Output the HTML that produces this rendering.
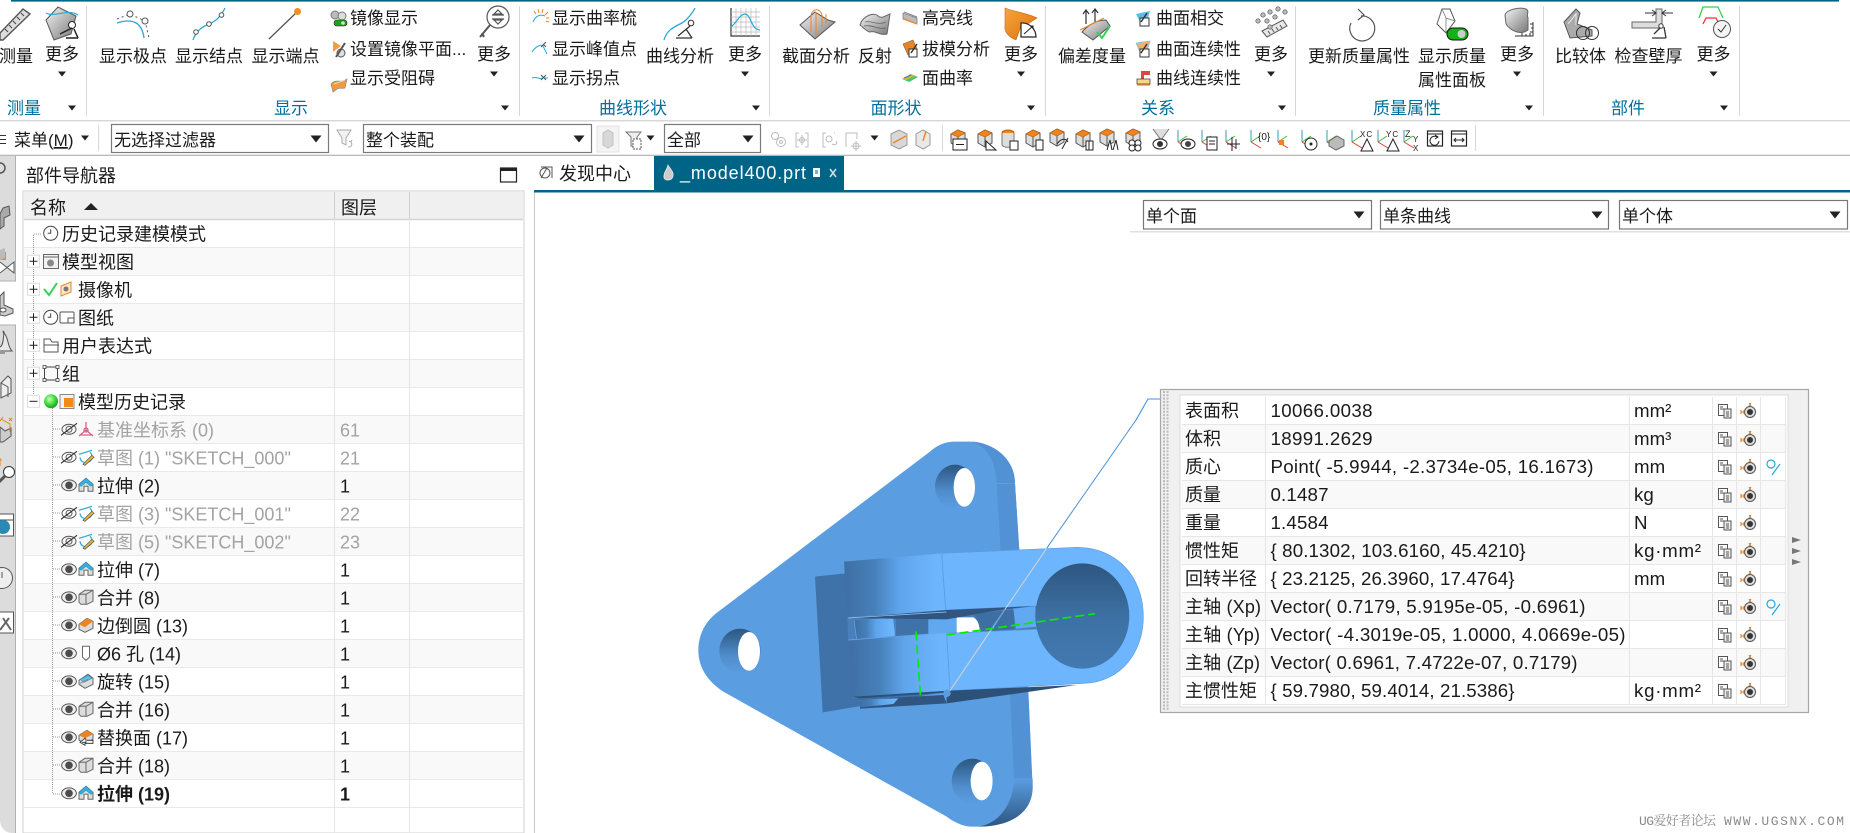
<!DOCTYPE html>
<html lang="zh"><head><meta charset="utf-8"><title>NX</title>
<style>
html,body{margin:0;padding:0;background:#fff;overflow:hidden}
svg{display:block}
text{font-family:"Liberation Sans","Noto Sans CJK SC",sans-serif;fill:#1a1a1a;font-size:17px}
.m{text-anchor:middle}
.g{fill:#00709b;text-anchor:middle}
.t{font-size:18px}
.v{font-size:18.7px}
.d{font-size:18px;fill:#a3a3a3}
.b{font-size:18px;font-weight:bold}
.w{fill:#fff}
</style></head><body>
<svg width="1850" height="833" viewBox="0 0 1850 833" xmlns="http://www.w3.org/2000/svg">
<defs>
<linearGradient id="hole" x1="0" y1="0" x2="0" y2="1"><stop offset="0" stop-color="#2c5680"/><stop offset=".6" stop-color="#4f8ccb"/><stop offset="1" stop-color="#5b9de1"/></linearGradient>
<linearGradient id="cyl" x1="0" y1="0" x2="1" y2="0"><stop offset="0" stop-color="#3f6fa3"/><stop offset=".3" stop-color="#4680ba"/><stop offset=".55" stop-color="#5fa5ec"/><stop offset=".9" stop-color="#6db5fd"/></linearGradient>
<linearGradient id="bore" x1="0" y1="0" x2="0" y2="1"><stop offset="0" stop-color="#2e5680"/><stop offset=".55" stop-color="#3e72a6"/><stop offset="1" stop-color="#4279b0"/></linearGradient>
<linearGradient id="earb" x1="0" y1="0" x2="0" y2="1"><stop offset="0" stop-color="#5b9de1"/><stop offset="1" stop-color="#2c5680"/></linearGradient>
<linearGradient id="sh" x1="0" y1="0" x2="1" y2="1"><stop offset="0" stop-color="#f4f4f4"/><stop offset="1" stop-color="#777"/></linearGradient>
<linearGradient id="or" x1="0" y1="0" x2="1" y2="1"><stop offset="0" stop-color="#f9a63c"/><stop offset="1" stop-color="#d96f0c"/></linearGradient>
<radialGradient id="gr" cx=".4" cy=".35" r=".7"><stop offset="0" stop-color="#c8ffb0"/><stop offset=".6" stop-color="#35d635"/><stop offset="1" stop-color="#149414"/></radialGradient>

<g id="arr"><path d="M-4 -2.5H4L0 2.5Z" fill="#222"/></g>
<g id="ddarr"><path d="M-5.5 -3.5H5.5L0 3.5Z" fill="#222"/></g>
<g id="eye"><ellipse rx="7.4" ry="5.4" fill="#eee" stroke="#555"/><circle r="3.8" fill="#4c4c4c"/></g>
<g id="eyeoff"><ellipse rx="7" ry="5" fill="none" stroke="#555"/><circle r="3" fill="none" stroke="#555"/><path d="M-8 6L8 -6" stroke="#333" stroke-width="1.2"/></g>
<g id="cube"><path d="M-7 -3L-1 -7H7V4L1 7H-5L-7 5Z" fill="#ddd" stroke="#666"/><path d="M-7 -3H0L7 -7M0 -3V7" fill="none" stroke="#666"/></g>
<g id="ext"><path d="M-7 -1L0 -7L7 -1V6H2V1H-2V6H-7Z" fill="#ddd" stroke="#666"/><path d="M-7 -1L0 -7L7 -1L5 1L0 -3L-5 1Z" fill="#38b0de" stroke="#1f8db8" stroke-width=".6"/></g>
<g id="fil"><path d="M-7 -1L1 -7L7 -4V3L-1 7L-7 4Z" fill="#ddd" stroke="#666"/><path d="M-7 -1L1 -7L7 -4L-1 2Z" fill="#ee8420"/></g>
<g id="hole2"><path d="M-3.5 -7H3.5V4L0 7L-3.5 4Z" fill="#fff" stroke="#666"/></g>
<g id="rev"><path d="M-7 -1L2 -7L7 -3V3L-1 7L-7 3Z" fill="#ddd" stroke="#666"/><path d="M-6 -2L2 -6L6 -3L-2 1Z" fill="#5cc0e6" stroke="#2c8db0" stroke-width=".6"/><path d="M-6 2L2 -2" stroke="#888" fill="none"/></g>
<g id="rep"><path d="M-7 -2L1 -7L7 -3V2L-1 6L-7 3Z" fill="#ddd" stroke="#666"/><path d="M-7 -2L1 -7L7 -3L-1 1Z" fill="#ee8420"/><path d="M-4 5H0V2L-1 1L-6 5L-1 8V6H7V3H1" fill="#fff" stroke="#222" stroke-width=".8"/></g>
<g id="skt"><path d="M-6 0A6 6 0 1 0 4 -5M-7 -3L6 -7" fill="none" stroke="#2aa6d6" stroke-width="1.2"/><path d="M-3 7L6 -2L8 0L-1 8Z" fill="#e9b93b" stroke="#555" stroke-width=".7"/></g>
<g id="clk"><circle r="7" fill="#fff" stroke="#444"/><path d="M0 -4V0H-3" fill="none" stroke="#444"/></g>
<g id="plus"><rect x="-6" y="-6" width="12" height="12" fill="#fff" stroke="#dedede"/><path d="M-4 0H4M0 -4V4" stroke="#222"/></g>
<g id="minus"><rect x="-6" y="-6" width="12" height="12" fill="#fff" stroke="#dedede"/><path d="M-4 0H4" stroke="#222"/></g>

<g id="pi1"><rect x="-6.5" y="-6.5" width="9" height="11" fill="#fff" stroke="#555"/><path d="M-5 -4H-2M-5 -2H-1" stroke="#555"/><rect x="-1" y="-2" width="7" height="9" fill="#eee" stroke="#555"/><path d="M1 1H4M1 3H4M1 5H4" stroke="#555"/></g>
<g id="pi2"><path d="M0 -8L2 -5M2 -8L0 -5" stroke="#e8730c"/><circle cx="1" cy="1" r="5.5" fill="#ddd" stroke="#555"/><circle cx="1" cy="1" r="3" fill="#333"/><path d="M-8 1H-5M-8 -1V3M-5 -1V3" stroke="#e8730c"/></g>
<g id="pi3"><circle cx="-2" cy="-3" r="4" fill="none" stroke="#22a8d8" stroke-width="1.2"/><path d="M-1 8L7 -3" stroke="#22a8d8" stroke-width="1.2"/></g>

<g id="tc"><path d="M-8 -4L-1 -8L6 -5V5L-1 9L-8 5Z" fill="#ddd" stroke="#555"/><path d="M-8 -4L-1 -8L6 -5L-1 -1Z" fill="#ee8420" stroke="#b65c06" stroke-width=".6"/><path d="M-1 -1V9" stroke="#555"/></g>
<g id="csy"><path d="M-6 6L-6 -6" stroke="#3a9db0" stroke-width="1"/><path d="M-6 6L3 0" stroke="#3dbb3d" stroke-width="1"/><path d="M-6 6L4 12" stroke="#e63535" stroke-width="1"/></g>
</defs>

<rect width="1850" height="833" fill="#fff"/>
<!-- top line -->
<rect x="11" y="0" width="1828" height="1.6" fill="#006487"/>

<!-- ribbon separators -->
<g stroke="#d8d8d8"><path d="M86.5 6V116M519.5 6V116M769.5 6V116M1045.5 6V116M1295.5 6V116M1543.5 6V116M1739.5 6V116"/></g>

<!-- ribbon text -->
<text class="m" x="16" y="62">测量</text>
<text class="m" x="62" y="60">更多</text>
<text class="g" x="24" y="114">测量</text>
<text class="m" x="133" y="62">显示极点</text>
<text class="m" x="209" y="62">显示结点</text>
<text class="m" x="285.500" y="62">显示端点</text>
<text x="350" y="24">镜像显示</text>
<text x="350" y="55">设置镜像平面...</text>
<text x="350" y="84">显示受阻碍</text>
<text class="m" x="494" y="60">更多</text>
<text class="g" x="291" y="114">显示</text>
<text x="552" y="24">显示曲率梳</text>
<text x="552" y="55">显示峰值点</text>
<text x="552" y="84">显示拐点</text>
<text class="m" x="680" y="62">曲线分析</text>
<text class="m" x="745" y="60">更多</text>
<text class="g" x="633" y="114">曲线形状</text>
<text class="m" x="816" y="62">截面分析</text>
<text class="m" x="875" y="62">反射</text>
<text x="922" y="24">高亮线</text>
<text x="922" y="55">拔模分析</text>
<text x="922" y="84">面曲率</text>
<text class="m" x="1021" y="60">更多</text>
<text class="g" x="896" y="114">面形状</text>
<text class="m" x="1092" y="62">偏差度量</text>
<text x="1156" y="24">曲面相交</text>
<text x="1156" y="55">曲面连续性</text>
<text x="1156" y="84">曲线连续性</text>
<text class="m" x="1271" y="60">更多</text>
<text class="g" x="1158" y="114">关系</text>
<text class="m" x="1359" y="62">更新质量属性</text>
<text class="m" x="1452" y="62">显示质量</text>
<text class="m" x="1452" y="86">属性面板</text>
<text class="m" x="1517" y="60">更多</text>
<text class="g" x="1407" y="114">质量属性</text>
<text class="m" x="1580.500" y="62">比较体</text>
<text class="m" x="1648.500" y="62">检查壁厚</text>
<text class="m" x="1713.500" y="60">更多</text>
<text class="g" x="1628" y="114">部件</text>

<!-- ribbon arrows -->
<use href="#arr" x="62" y="74"/><use href="#arr" x="72" y="108"/>
<use href="#arr" x="494" y="74"/><use href="#arr" x="505" y="108"/>
<use href="#arr" x="745" y="74"/><use href="#arr" x="756" y="108"/>
<use href="#arr" x="1021" y="74"/><use href="#arr" x="1031" y="108"/>
<use href="#arr" x="1271" y="74"/><use href="#arr" x="1282" y="108"/>
<use href="#arr" x="1517" y="74"/><use href="#arr" x="1529" y="108"/>
<use href="#arr" x="1713.500" y="74"/><use href="#arr" x="1724" y="108"/>

<!-- ribbon icons -->
<g><path d="M0 33L23 9L30 14L3 40H0Z" fill="#ddd" stroke="#555" stroke-width="1.4"/><path d="M5 29L8 32M9 25L12 28M13 21L16 24M17 17L20 20M21 13L24 16" stroke="#444"/></g>
<g><path d="M46 20L58 7L76 16L71 34L54 40Z" fill="url(#sh)" stroke="#555"/><path d="M46 13C55 18 68 8 78 15" fill="none" stroke="#28a9d6" stroke-width="1.2"/><circle cx="72" cy="25" r="3.500" fill="#fff" stroke="#222"/><path d="M60 34L72 28M66 38H78M74 29L78 38" stroke="#222" stroke-width="1.500"/></g>
<g fill="none"><path d="M117 19L130 14L145 21L149 38" stroke="#555" stroke-dasharray="2 3"/><path d="M117 23C132 18 142 22 144 38" stroke="#28a9d6" stroke-width="1.300"/><circle cx="130" cy="14" r="3" fill="#fff" stroke="#555"/><circle cx="145" cy="21" r="3" fill="#fff" stroke="#555"/></g>
<g fill="none"><path d="M193 40C196 30 204 26 211 23C218 20 222 14 225 8" stroke="#28a9d6" stroke-width="1.300"/><circle cx="196" cy="32" r="2.300" fill="#fff" stroke="#555"/><circle cx="209" cy="24" r="2.300" fill="#fff" stroke="#555"/><circle cx="221.500" cy="15" r="2.300" fill="#fff" stroke="#555"/></g>
<g><path d="M269 39L297 12" stroke="#555" stroke-width="1.300"/><circle cx="297.500" cy="11.500" r="3.500" fill="#f09020"/></g>
<g><circle cx="335" cy="15" r="4" fill="#bbb" stroke="#777"/><circle cx="342" cy="16" r="4" fill="#ddd" stroke="#777"/><rect x="334" y="20" width="13" height="6" rx="3" fill="#1aa41a" stroke="#222" stroke-width=".6"/><circle cx="343" cy="23" r="1.800" fill="#ddd"/></g>
<g><path d="M333 41L341 46L333 52Z" fill="#f0a040"/><circle cx="341" cy="53" r="4" fill="#ddd" stroke="#555"/><path d="M345 43L336 57" stroke="#555" stroke-width="2"/></g>
<g><path d="M331 84C336 78 340 84 347 79L345 88C340 89 338 87 336 90L333 92Z" fill="#ef9b3d" stroke="#888" stroke-width=".7"/><path d="M334 84L345 80" stroke="#ddd"/></g>
<g fill="none" stroke="#555" stroke-width="1.200"><circle cx="498" cy="17" r="11" fill="#fff"/><path d="M490 25L480 37M482 33L484 37" stroke-width="2"/><path d="M492 15H504M492 19H504" /><path d="M494 14L498 10L502 14ZM494 20L498 24L502 20Z" fill="#fff"/></g>
<g fill="none"><path d="M533 22C536 15 541 14 545 16" stroke="#28a9d6"/><path d="M536 14L534 11M539 13L538 9M542 13L543 9M545 15L548 12M546 18L549 18M546 21L549 22" stroke="#ee8420"/>
<path d="M532 52C536 46 541 44 543 46L547 54" stroke="#28a9d6"/><path d="M541 47L546 42M543 44L546 47" stroke="#555"/>
<path d="M532 78C537 76 539 80 543 78H548" stroke="#28a9d6"/><path d="M541 75L546 80M546 75L541 80" stroke="#555"/></g>
<g fill="none"><path d="M664 40C668 26 680 26 686 20C690 16 693 12 695 8" stroke="#28a9d6" stroke-width="1.300"/><circle cx="691" cy="23" r="2.800" fill="#fff" stroke="#333"/><path d="M678 36L690 26M676 38H692M686 29L692 38" stroke="#333" stroke-width="1.300"/></g>
<g fill="none"><path d="M731 8V36H760" stroke="#333" stroke-width="1.200"/><path d="M736 8V36M741 8V36M746 8V36M751 8V36M756 8V36M731 12H760M731 17H760M731 22H760M731 27H760M731 32H760" stroke="#bbb" stroke-width=".7"/><path d="M731 27C737 22 740 14 745 14C751 14 751 30 760 30" stroke="#28a9d6" stroke-width="1.200"/></g>
<g><path d="M800 25L815 12L828 20L835 22L815 39Z" fill="url(#sh)" stroke="#555"/><path d="M811 32V15C813 8 820 8 822 15V27M816 35V12M826 23V14" fill="none" stroke="#ee8420"/></g>
<g><path d="M860 25C863 15 875 12 878 16C882 19 885 16 890 14L887 34C880 36 875 30 870 32C867 32 864 28 860 25Z" fill="url(#sh)" stroke="#666"/><path d="M865 22C870 20 878 26 886 22M864 26C872 24 878 30 886 28" fill="none" stroke="#666" stroke-width=".8"/></g>
<g><path d="M903 13L917 18V24L903 19Z" fill="#bbb" stroke="#666" stroke-width=".6"/><path d="M904 19L917 24" stroke="#ee8420" stroke-width="1.400"/><path d="M904 12L917 17" stroke="#888"/></g>
<g><path d="M903 44L913 40L917 49L908 55Z" fill="#ee8420" stroke="#666" stroke-width=".6"/><rect x="909" y="49" width="8" height="8" fill="#fff" stroke="#333"/><path d="M911 53L917 44" stroke="#333" stroke-width="1.400"/></g>
<g><path d="M902 79L911 74L918 77L909 82Z" fill="#3ccb6a"/><path d="M902 79L911 74L915 76L906 80Z" fill="#e8b030"/><path d="M904 78L911 75" stroke="#3a78d8" stroke-width="1.200"/></g>
<g><path d="M1005 8C1012 11 1030 14 1037 18L1020 29L1016 40C1009 37 1004 32 1005 26Z" fill="url(#or)" stroke="#c96a10" stroke-width=".6"/><path d="M1021 23A14 14 0 0 1 1036 37H1021Z" fill="#fff" stroke="#222" stroke-width="1.200"/><path d="M1024 34L1033 26M1030 26H1033V29" fill="none" stroke="#222"/></g>
<g><path d="M1082 32C1087 26 1096 20 1106 20L1110 26L1093 40Z" fill="url(#sh)" stroke="#555"/><path d="M1086 10V24M1083 14L1086 10L1089 14M1095 9V22M1092 13L1095 9L1098 13" fill="none" stroke="#333" stroke-width="1.200"/><path d="M1080 30L1104 18" stroke="#ee8420"/><path d="M1097 32L1102 38L1110 26" fill="none" stroke="#34d152" stroke-width="2"/></g>
<g><path d="M1136 14L1150 11L1147 21L1140 22Z" fill="#5cc0e6"/><rect x="1140" y="18" width="9" height="8" fill="#fff" stroke="#333"/><path d="M1141 22L1147 13" stroke="#333" stroke-width="1.400"/></g>
<g><path d="M1136 43L1150 41L1147 51L1140 52Z" fill="#f0b070" stroke="#5cc0e6" stroke-width=".6"/><rect x="1140" y="49" width="9" height="8" fill="#fff" stroke="#333"/><path d="M1141 53L1147 44" stroke="#333" stroke-width="1.400"/></g>
<g><path d="M1141 71H1150V75H1144V79H1141Z" fill="#d44"/><rect x="1137" y="79" width="13" height="5" fill="#f2d98a" stroke="#333" stroke-width=".7"/><path d="M1137 85H1150" stroke="#ee8420" stroke-width="1.200"/></g>
<g><path d="M1262 31L1283 20L1287 26L1267 37Z" fill="#e8e8e8" stroke="#555"/><path d="M1268 31L1270 34M1272 29L1274 32M1276 27L1278 30M1280 25L1282 28" stroke="#555"/><g fill="#bbb" stroke="#555" stroke-width=".7"><circle cx="1258" cy="21" r="2.200"/><circle cx="1263" cy="15" r="2.200"/><circle cx="1270" cy="12" r="2.200"/><circle cx="1278" cy="9" r="2.200"/><circle cx="1285" cy="12" r="2.200"/><circle cx="1267" cy="21" r="2.200"/><circle cx="1275" cy="17" r="2.200"/><circle cx="1270" cy="27" r="2.200"/></g></g>
<g fill="none" stroke="#555" stroke-width="1.200"><path d="M1361 16A12.500 12.500 0 1 1 1351 23M1358 9L1364 15L1358 20"/></g>
<g><path d="M1442 9H1450L1455 21L1446 33L1437 24Z" fill="#fff" stroke="#555"/><path d="M1442 9L1446 18L1455 21M1446 18L1446 33M1442 9L1437 24" fill="none" stroke="#777" stroke-width=".8"/><rect x="1447" y="28" width="21" height="12" rx="6" fill="#15b015" stroke="#111"/><circle cx="1461.500" cy="34" r="4" fill="#ccc"/></g>
<g><path d="M1505 15C1507 9 1520 7 1526 9C1530 11 1526 14 1528 18L1528 30C1520 36 1510 30 1506 24Z" fill="url(#sh)" stroke="#666"/><path d="M1533 22V36H1515M1530 36V33M1526 36V34M1522 36V33M1533 32H1530M1533 28H1531M1533 24H1530" fill="none" stroke="#333"/></g>
<g><path d="M1564 22L1576 9L1580 13L1577 24L1592 30L1592 36L1570 38Z" fill="#aaa" stroke="#555"/><path d="M1568 24L1576 14L1576 25" fill="none" stroke="#eee"/><circle cx="1583" cy="33" r="6.500" fill="none" stroke="#333"/><circle cx="1592" cy="33" r="6.500" fill="none" stroke="#333"/></g>
<g><path d="M1632 22H1656V9H1662V28H1632Z" fill="#ddd" stroke="#666"/><path d="M1645 13H1656M1673 13H1662M1652 10L1656 13L1652 16M1666 10L1662 13L1666 16" fill="none" stroke="#333"/><circle cx="1661" cy="26" r="2.200" fill="#fff" stroke="#333"/><path d="M1652 38H1666M1654 34L1660 28M1664 27L1666 38" stroke="#333" stroke-width="1.300" fill="none"/></g>
<g fill="none"><path d="M1699 18L1703 7H1718L1723 18" stroke="#34d152" stroke-width="1.300"/><path d="M1703 24L1706 18H1716L1719 24" stroke="#e33" stroke-width="1.300"/><circle cx="1722" cy="29" r="8.500" fill="#f4f4f4" stroke="#555"/><path d="M1718 29L1721 32L1726 25" stroke="#333"/></g>

<!-- ribbon bottom line and toolbar -->
<rect x="0" y="120" width="1850" height="1.500" fill="#d8d8d8"/>
<rect x="0" y="154.700" width="1850" height="1.300" fill="#b9b9b9"/>
<path d="M0 135.500H6M0 139.500H6M0 143.500H6" stroke="#333"/>
<text x="14" y="146">菜单(<tspan text-decoration="underline">M</tspan>)</text>
<use href="#arr" x="85" y="138"/>
<path d="M98.500 125V151" stroke="#d8d8d8"/>
<rect x="111.500" y="124.500" width="217" height="28" fill="#fff" stroke="#7a7a7a" stroke-width="1.200"/>
<text x="114" y="146">无选择过滤器</text>
<use href="#ddarr" x="316" y="139"/>
<g fill="none" stroke="#aaa"><path d="M337 130H351L346 138V145L342 143V138Z" fill="#f2f2f2"/><path d="M348 147C351 147 353 145 351 142M349 141L351 142L352 140"/></g>
<rect x="363.500" y="124.500" width="228" height="28" fill="#fff" stroke="#7a7a7a" stroke-width="1.200"/>
<text x="366" y="146">整个装配</text>
<use href="#ddarr" x="579" y="139"/>
<rect x="597" y="126" width="22" height="26" fill="#f4f4f4" stroke="#e4e4e4"/>
<path d="M603 133L608 130L613 133V145L608 148L603 145Z" fill="#d8d8d8" stroke="#c0c0c0"/>
<g fill="none" stroke="#777"><path d="M626 132H641L637 137V146H631V137Z" fill="#eee"/><path d="M633 139H641V149H633Z" fill="#fff" stroke="#555" stroke-dasharray="2 1"/></g>
<use href="#arr" x="650.500" y="138"/>
<rect x="664.500" y="124.500" width="96" height="28" fill="#fff" stroke="#7a7a7a" stroke-width="1.200"/>
<text x="667" y="146">全部</text>
<use href="#ddarr" x="748" y="139"/>
<g fill="none" stroke="#bdbdbd"><circle cx="775" cy="136" r="3.500"/><circle cx="781" cy="142" r="4.500"/><circle cx="781" cy="142" r="1.500"/>
<path d="M799 133H796V147H799M805 133H808V147H805M797 140H807M802 135V145"/><circle cx="802" cy="140" r="2.500"/>
<path d="M826 133H823V147H826M834 133H835"/><circle cx="829" cy="139" r="3"/><path d="M832 144C836 146 838 143 836 141"/>
<path d="M846 147V133H857V139"/><circle cx="856" cy="146" r="3"/><path d="M851 146H861M856 141V151"/></g>
<use href="#arr" x="874.500" y="138"/>
<g><path d="M891 134L899 130L907 134V145L899 149L891 145Z" fill="#d8d8d8" stroke="#999"/><path d="M893 143L906 136" stroke="#ee8420" stroke-width="1.400"/>
<path d="M916 134L923 130L930 134V145L923 149L916 145Z" fill="#e8e8e8" stroke="#999"/><path d="M923 141L926 131" stroke="#ee8420" stroke-width="1.400"/></g>
<path d="M942.500 125V151" stroke="#d8d8d8"/>
<use href="#tc" x="959" y="138"/><rect x="960" y="135" width="0" height="0"/><rect x="953" y="139" width="14" height="11" fill="#fff" stroke="#222"/><path d="M956 144.500H964" stroke="#222"/>
<use href="#tc" x="986" y="138"/><path d="M986 150V141L996 150Z" fill="#fff" stroke="#222"/>
<ellipse cx="1008" cy="133" rx="6" ry="3" fill="#ee8420" stroke="#b65c06"/><path d="M1002 133V145C1004 148 1012 148 1014 145V133" fill="#ddd" stroke="#777"/><rect x="1010" y="141" width="8" height="9" fill="#fff" stroke="#222"/>
<use href="#tc" x="1034" y="138"/><rect x="1036" y="140" width="7" height="10" fill="#fff" stroke="#222"/>
<use href="#tc" x="1058" y="137"/><path d="M1057 144C1061 138 1066 138 1068 142M1062 149L1068 138" stroke="#222" fill="none"/>
<use href="#tc" x="1084" y="138"/><rect x="1086" y="141" width="7" height="9" fill="#fff" stroke="#222"/><path d="M1089 141V150" stroke="#222"/>
<use href="#tc" x="1108" y="137"/><path d="M1107 150L1110 140L1112 150M1113 150L1116 140L1118 150" fill="#fff" stroke="#222"/>
<use href="#tc" x="1134" y="137"/><g fill="#fff" stroke="#222"><circle cx="1132" cy="143" r="3"/><circle cx="1138" cy="143" r="3"/><circle cx="1132" cy="148" r="3"/><circle cx="1138" cy="148" r="3"/></g>
<path d="M1153 129L1161 140L1169 129" fill="#ddd" stroke="#777"/><ellipse cx="1160" cy="144" rx="7" ry="5" fill="#fff" stroke="#222"/><circle cx="1160" cy="144" r="3" fill="#333"/>
<use href="#csy" x="1184" y="136"/><ellipse cx="1188" cy="144" rx="7" ry="5" fill="#fff" stroke="#222"/><circle cx="1188" cy="144" r="3" fill="#444"/>
<use href="#csy" x="1208" y="136"/><rect x="1207" y="137" width="10" height="13" fill="#fff" stroke="#222"/><path d="M1209 141H1215M1209 144H1215" stroke="#222"/>
<use href="#csy" x="1232" y="136"/><path d="M1232 137V151M1227 144H1240M1236 139V149" stroke="#222"/>
<use href="#csy" x="1257" y="136"/><text x="1258" y="140" style="font-size:10px">{0}</text>
<use href="#csy" x="1284" y="136"/><rect x="1279" y="140" width="5" height="5" fill="#ee8420"/>
<use href="#csy" x="1308" y="136"/><circle cx="1311" cy="144" r="6" fill="#fff" stroke="#222"/><circle cx="1311" cy="144" r="1.500" fill="#222"/>
<use href="#csy" x="1333" y="136"/><path d="M1329 141L1337 136L1344 140V146L1336 150L1329 146Z" fill="#bbb" stroke="#666"/>
<use href="#csy" x="1358" y="136"/><path d="M1361 151L1367 139L1373 151Z" fill="#fff" stroke="#222"/><text x="1360" y="137" style="font-size:8px;letter-spacing:1px">XC</text>
<use href="#csy" x="1384" y="136"/><path d="M1387 151L1393 139L1399 151Z" fill="#fff" stroke="#222"/><text x="1386" y="137" style="font-size:8px;letter-spacing:1px">YC</text>
<use href="#csy" x="1410" y="136"/><text x="1405" y="137" style="font-size:9px">Z</text><text x="1413" y="142" style="font-size:8px">Y</text><text x="1413" y="151" style="font-size:8px">X</text>
<rect x="1427.500" y="131" width="15" height="15" fill="#fff" stroke="#222" stroke-width="1.200"/><path d="M1427.500 134H1442.500" stroke="#222"/><path d="M1439 141A4.500 4.500 0 1 1 1437 137M1435 135L1438 137L1435 139" fill="none" stroke="#222"/>
<rect x="1451.500" y="131" width="15" height="15" fill="#fff" stroke="#222" stroke-width="1.200"/><path d="M1451.500 134H1466.500M1454 140H1464M1456 138L1454 140L1456 142M1462 138L1464 140L1462 142" fill="none" stroke="#222"/>
<path d="M1475.500 125V151" stroke="#d8d8d8"/>

<!-- left rail -->
<path d="M0 156H15.500V833H12C5 833 0 827 0 820Z" fill="#dcdcdc"/>
<rect x="0" y="281" width="16.500" height="44" fill="#fff"/>
<path d="M0 281H15.500V156M0 325H15.500V833" fill="none" stroke="#b0b0b0"/>
<g stroke="#555" fill="#ccc">
<circle cx="0" cy="168" r="5" fill="none" stroke-width="1.500"/>
<path d="M0 214L3 208L9 206L10 215L4 218V226L0 229Z" fill="#aaa"/>
<path d="M0 252H6V260H0Z" fill="#e98a25" stroke="none"/><path d="M0 250L5 248V258L0 260Z" fill="#bbb" stroke="none"/><path d="M0 262L14 273V262L0 273" fill="#fff"/>
<path d="M0 296L4 292V305L13 309V313L5 316L0 315Z" fill="#ccc"/><ellipse cx="3" cy="310" rx="3" ry="2" fill="#fff"/>
<path d="M0 347C4 345 3 336 4 334C2 331 4 330 4 333C9 338 7 346 12 351H0M0 353H5" fill="#e8e8e8"/>
<path d="M1 383L8 376L11 379V393L1 398ZM1 383L8 387V397" fill="#eee"/>
<path d="M0 427L5 431L11 428V436L3 442H0Z" fill="#ccc"/><path d="M1 419L10 424V432M3 417L0 421M9 418L12 421M12 418L9 421" stroke="#e8860c" fill="none"/>
<circle cx="9" cy="472" r="5.500" fill="#fff" stroke="#333"/><path d="M5 476L-1 482" stroke-width="3"/><path d="M0 458V466M0 460H2" stroke="#e8860c" fill="none"/>
<rect x="-2" y="514" width="15.500" height="22" fill="#fff"/><path d="M0 520H13" stroke="#444"/><circle cx="3" cy="527" r="7" fill="#2a8ab5" stroke="none"/>
<circle cx="2" cy="578" r="10.500" fill="#eee"/><path d="M2 572V578" />
<rect x="-2" y="612" width="15.500" height="21" fill="#fff"/><path d="M0 630L9 618M3 618L11 630" stroke-width="2" stroke="#666"/>
</g>

<!-- navigator -->
<text class="t" x="26" y="182">部件导航器</text>
<rect x="500.500" y="168" width="16" height="14" fill="#fff" stroke="#222" stroke-width="1.200"/>
<rect x="500" y="168" width="17" height="3" fill="#222"/>
<rect x="23" y="191" width="501" height="642" fill="#fff" stroke="#d8d8d8" stroke-width="1.200"/>
<rect x="24" y="192" width="499" height="27.500" fill="#f0f0f0"/>
<g fill="#f9f9f9">
<rect x="24" y="247.300" width="499" height="28"/><rect x="24" y="303.300" width="499" height="28"/><rect x="24" y="359.300" width="499" height="28"/><rect x="24" y="415.300" width="499" height="28"/><rect x="24" y="471.300" width="499" height="28"/><rect x="24" y="527.300" width="499" height="28"/><rect x="24" y="583.300" width="499" height="28"/><rect x="24" y="639.300" width="499" height="28"/><rect x="24" y="695.300" width="499" height="28"/><rect x="24" y="751.300" width="499" height="28"/>
</g>
<g stroke="#e9e9e9" fill="none">
<path d="M24 219.500H523" stroke="#d4d4d4" stroke-width="1.500"/>
<path d="M24 247.500H523M24 275.500H523M24 303.500H523M24 331.500H523M24 359.500H523M24 387.500H523M24 415.500H523M24 443.500H523M24 471.500H523M24 499.500H523M24 527.500H523M24 555.500H523M24 583.500H523M24 611.500H523M24 639.500H523M24 667.500H523M24 695.500H523M24 723.500H523M24 751.500H523M24 779.500H523M24 807.500H523"/>
<path d="M334.500 192V833M409.500 192V833" stroke="#e4e4e4"/>
</g>
<path d="M334.500 192V219M409.500 192V219" stroke="#cfcfcf"/>
<text class="t" x="30" y="214">名称</text>
<path d="M84 210L91 203L98 210Z" fill="#222"/>
<text class="t" x="341" y="214">图层</text>

<!-- tree lines -->
<path d="M33.500 235V395M34 234H42M52.500 408V794M53 429H61M53 457H61M53 485H61M53 513H61M53 541H61M53 569H61M53 597H61M53 625H61M53 653H61M53 681H61M53 709H61M53 737H61M53 765H61M53 794H61" stroke="#999" stroke-dasharray="1 1" fill="none"/>

<!-- tree rows -->
<use href="#clk" x="50.700" y="233.300"/><text class="t" x="62" y="240.500">历史记录建模模式</text>
<use href="#plus" x="33.500" y="261.300"/><rect x="43.500" y="254.500" width="15" height="14" fill="#f2f2f2" stroke="#666"/><path d="M44 257H58" stroke="#666"/><circle cx="50.500" cy="263" r="3.500" fill="#888"/><text class="t" x="62" y="268.500">模型视图</text>
<use href="#plus" x="33.500" y="289.300"/><path d="M44 289L49 295L57 283" fill="none" stroke="#34d152" stroke-width="2"/><path d="M61 286L71 282V292L61 296Z" fill="#fbe5c8" stroke="#e8862a"/><circle cx="66" cy="289" r="2.500" fill="#777"/><text class="t" x="78" y="296.500">摄像机</text>
<use href="#plus" x="33.500" y="317.300"/><use href="#clk" x="50.700" y="317.300"/><rect x="60" y="312" width="14" height="11" rx="1" fill="#fff" stroke="#555"/><path d="M68 318H74V323H68Z" fill="none" stroke="#555"/><text class="t" x="78" y="324.500">图纸</text>
<use href="#plus" x="33.500" y="345.300"/><path d="M44 352V339H50L52 342H58V352Z" fill="#fff" stroke="#555"/><path d="M44 345H59" stroke="#555"/><text class="t" x="62" y="352.500">用户表达式</text>
<use href="#plus" x="33.500" y="373.300"/><rect x="44.500" y="367" width="13" height="13" fill="none" stroke="#444"/><g fill="#fff" stroke="#444" stroke-width=".8"><rect x="43" y="365.500" width="3" height="3"/><rect x="56" y="365.500" width="3" height="3"/><rect x="43" y="378.500" width="3" height="3"/><rect x="56" y="378.500" width="3" height="3"/></g><text class="t" x="62" y="380.500">组</text>
<use href="#minus" x="33.500" y="401.300"/><circle cx="51" cy="401.300" r="7" fill="url(#gr)"/><rect x="60" y="394.500" width="14" height="14" fill="#f2f2f2" stroke="#888"/><rect x="64" y="398" width="9" height="9" fill="#f28a1a"/><text class="t" x="78" y="408.500">模型历史记录</text>

<use href="#eyeoff" x="69" y="429.300"/><g fill="none" stroke="#d9628a" stroke-width="1.300"><path d="M86 422V430M86 430L79 436M86 430L93 436M80 435H92"/><circle cx="86" cy="430" r="2"/></g><text class="d" x="97" y="436.500">基准坐标系 (0)</text><text class="d" x="340" y="436.500">61</text>
<use href="#eyeoff" x="69" y="457.300"/><use href="#skt" x="86" y="457.300"/><text class="d" x="97" y="464.500">草图 (1) "SKETCH_000"</text><text class="d" x="340" y="464.500">21</text>
<use href="#eye" x="69" y="485.300"/><use href="#ext" x="86" y="485.300"/><text class="t" x="97" y="492.500">拉伸 (2)</text><text class="t" x="340" y="492.500">1</text>
<use href="#eyeoff" x="69" y="513.300"/><use href="#skt" x="86" y="513.300"/><text class="d" x="97" y="520.500">草图 (3) "SKETCH_001"</text><text class="d" x="340" y="520.500">22</text>
<use href="#eyeoff" x="69" y="541.300"/><use href="#skt" x="86" y="541.300"/><text class="d" x="97" y="548.500">草图 (5) "SKETCH_002"</text><text class="d" x="340" y="548.500">23</text>
<use href="#eye" x="69" y="569.300"/><use href="#ext" x="86" y="569.300"/><text class="t" x="97" y="576.500">拉伸 (7)</text><text class="t" x="340" y="576.500">1</text>
<use href="#eye" x="69" y="597.300"/><use href="#cube" x="86" y="597.300"/><text class="t" x="97" y="604.500">合并 (8)</text><text class="t" x="340" y="604.500">1</text>
<use href="#eye" x="69" y="625.300"/><use href="#fil" x="86" y="625.300"/><text class="t" x="97" y="632.500">边倒圆 (13)</text><text class="t" x="340" y="632.500">1</text>
<use href="#eye" x="69" y="653.300"/><use href="#hole2" x="86" y="653.300"/><text class="t" x="97" y="660.500">Ø6 孔 (14)</text><text class="t" x="340" y="660.500">1</text>
<use href="#eye" x="69" y="681.300"/><use href="#rev" x="86" y="681.300"/><text class="t" x="97" y="688.500">旋转 (15)</text><text class="t" x="340" y="688.500">1</text>
<use href="#eye" x="69" y="709.300"/><use href="#cube" x="86" y="709.300"/><text class="t" x="97" y="716.500">合并 (16)</text><text class="t" x="340" y="716.500">1</text>
<use href="#eye" x="69" y="737.300"/><use href="#rep" x="86" y="737.300"/><text class="t" x="97" y="744.500">替换面 (17)</text><text class="t" x="340" y="744.500">1</text>
<use href="#eye" x="69" y="765.300"/><use href="#cube" x="86" y="765.300"/><text class="t" x="97" y="772.500">合并 (18)</text><text class="t" x="340" y="772.500">1</text>
<use href="#eye" x="69" y="793.300"/><use href="#ext" x="86" y="793.300"/><text class="b" x="97" y="800.500">拉伸 (19)</text><text class="b" x="340" y="800.500">1</text>

<!-- tabs -->
<path d="M534.500 192V833" stroke="#c9c9c9"/>
<rect x="534" y="190" width="1316" height="2.500" fill="#006487"/>
<rect x="654" y="156" width="190" height="34" fill="#006487"/>
<g fill="none" stroke="#555"><circle cx="545" cy="173" r="5"/><path d="M541 167H552V178M547 168L541 178"/></g>
<text class="t" x="559" y="180">发现中心</text>
<path d="M664 178C663 173 667 170 668 165C671 170 674 172 673 176C672 181 665 181 664 178Z" fill="#ccc" stroke="#eee" stroke-width=".7"/>
<text class="t w" x="680" y="179" textLength="126">_model400.prt</text>
<rect x="813" y="168" width="7" height="9" fill="#fff"/><path d="M815 171H818M815 173H818" stroke="#006487"/>
<path d="M830 169L836 177M836 169L830 177" stroke="#ddd" stroke-width="1.500"/>

<!-- view dropdowns -->
<g fill="#fff" stroke="#777" stroke-width="1.200">
<rect x="1143.500" y="200.500" width="228" height="28.500"/><rect x="1380.500" y="200.500" width="228" height="28.500"/><rect x="1619.500" y="200.500" width="228" height="28.500"/>
</g>
<text x="1146" y="222">单个面</text><text x="1383" y="222">单条曲线</text><text x="1622" y="222">单个体</text>
<use href="#ddarr" x="1359" y="215"/><use href="#ddarr" x="1597" y="215"/><use href="#ddarr" x="1835" y="215"/>
<rect x="1130" y="231" width="720" height="1.500" fill="#e0e0e0"/>

<!-- model -->
<g transform="translate(680 420) scale(.33333)">
<path d="M750 95C775 72 800 65 825 65H880C960 75 1005 130 1005 190L1018 392L1030 600L1045 815L1058 1100C1058 1180 990 1220 895 1220H870C845 1218 820 1205 800 1190L130 815C85 785 55 745 55 690C55 640 80 600 115 575Z" fill="#5b9de1"/>
<path d="M880 65C960 75 1005 130 1005 190L1018 392H962L950 190C948 130 925 85 880 65Z" fill="#5291d3"/>
<path d="M948 190H1005" stroke="#66a5e8" stroke-width="2"/>
<path d="M990 815H1045L1056 1075H1002Z" fill="#5291d3"/>
<path d="M1002 1075H1058V1100C1058 1180 990 1220 895 1220C960 1210 1000 1150 1002 1075Z" fill="url(#earb)"/>
<ellipse cx="825" cy="200" rx="60" ry="66" fill="url(#hole)"/><ellipse cx="853" cy="202" rx="32" ry="58" fill="#fff"/>
<ellipse cx="180" cy="693" rx="62" ry="67" fill="url(#hole)"/><ellipse cx="207" cy="694" rx="33" ry="58" fill="#fff"/>
<ellipse cx="877" cy="1083" rx="62" ry="67" fill="url(#hole)"/><ellipse cx="905" cy="1083" rx="33" ry="58" fill="#fff"/>
<path d="M405 470L497 460L520 832L800 815L428 877Z" fill="#3f72a8"/>
<path d="M502 592L1070 555V630L505 662Z" fill="#4a80ba"/>
<path d="M522 600L640 594L645 648L530 658Z" fill="url(#cyl)"/>
<path d="M640 594L745 590V642L645 648Z" fill="#3f72a8"/>
<path d="M745 598L830 592V638L745 642Z" fill="#60a8f0"/>
<path d="M830 592H880C895 600 900 620 900 634L830 638Z" fill="#fff"/>
<path d="M880 582L1003 568V628L900 634C898 610 890 595 880 582Z" fill="#3e6fa3"/>
<path d="M1000 566L1065 558L1072 620L1008 626Z" fill="#62a8f2"/>
<path d="M492 425L785 400L797 570L502 592Z" fill="url(#cyl)"/>
<path d="M507 662L800 638L810 812L517 830Z" fill="url(#cyl)"/>
<path d="M785 400L1190 382C1310 382 1390 470 1390 590C1390 700 1320 785 1215 790L810 812L800 640L1070 628L1070 558L797 570Z" fill="#6db5fd" stroke="#5b9de1" stroke-width="2"/>
<path d="M785 400L797 570M800 640L810 812" stroke="#5b9de1" stroke-width="2"/>
<path d="M505 594L800 570L1065 558L970 568L800 598L640 596Z" fill="#2f5580"/>
<path d="M505 594L800 576" stroke="#9ccaf7" stroke-width="2"/>
<path d="M505 660L800 638M645 598L645 648M522 600L530 658" stroke="#6aa6e6" stroke-width="2" fill="none"/>
<path d="M1190 795L810 812L518 830L540 835L800 818L800 850L428 877L800 850L1000 822Z" fill="#2c5078"/>
<path d="M540 838L660 832L790 825L800 850L540 866Z" fill="#2f5580"/>
<path d="M540 838L540 862L640 852L655 835Z" fill="url(#cyl)"/>
<ellipse cx="1207" cy="588" rx="141" ry="158" fill="url(#bore)"/>
<path d="M810 812L975 568" stroke="#cfcfcf" stroke-width="3.500"/>
<path d="M975 568L1100 385" stroke="#cfd6de" stroke-width="3"/>
<path d="M930 632L975 568" stroke="#5b9de1" stroke-width="3"/>
<path d="M1100 385L1368 0" stroke="#4a90d9" stroke-width="3"/>
<path d="M800 645L1245 581" stroke="#00ee00" stroke-width="5" stroke-dasharray="27 12"/>
<path d="M708 634L722 838" stroke="#00ee00" stroke-width="5" stroke-dasharray="27 14"/>
<circle cx="801" cy="820" r="11" fill="#5b9de1"/>
</g>
<path d="M1136 420L1148 399H1160" fill="none" stroke="#4a90d9" stroke-width="1.100"/>

<!-- property panel -->
<rect x="1160.500" y="389.500" width="648" height="323" fill="#f0f0f0" stroke="#a6a6a6" stroke-width="1.200"/>
<g fill="none" stroke="#bcbcbc" stroke-width="2" stroke-dasharray="2 1.300"><path d="M1164 391V711M1167.500 391V711"/></g>
<rect x="1180" y="395" width="608" height="312" fill="#fff" stroke="#dcdcdc"/>
<g fill="#f9f9f9"><rect x="1181" y="424.300" width="606" height="28"/><rect x="1181" y="480.300" width="606" height="28"/><rect x="1181" y="536.300" width="606" height="28"/><rect x="1181" y="592.300" width="606" height="28"/><rect x="1181" y="648.300" width="606" height="28"/></g>
<g fill="none" stroke="#e6e6e6"><path d="M1182 424.500H1786M1182 452.500H1786M1182 480.500H1786M1182 508.500H1786M1182 536.500H1786M1182 564.500H1786M1182 592.500H1786M1182 620.500H1786M1182 648.500H1786M1182 676.500H1786M1182 704.500H1786"/><path d="M1265.500 397V705M1629.500 397V705M1712.500 397V705M1736.500 397V705M1760.500 397V705M1785.500 397V705"/></g>
<text class="t" x="1185" y="417">表面积</text><text class="v" x="1270.500" y="417" textLength="102">10066.0038</text><text class="v" x="1634" y="417">mm²</text>
<text class="t" x="1185" y="445">体积</text><text class="v" x="1270.500" y="445" textLength="102">18991.2629</text><text class="v" x="1634" y="445">mm³</text>
<text class="t" x="1185" y="473">质心</text><text class="v" x="1270.500" y="473" textLength="323">Point( -5.9944, -2.3734e-05, 16.1673)</text><text class="v" x="1634" y="473">mm</text>
<text class="t" x="1185" y="501">质量</text><text class="v" x="1270.500" y="501" textLength="58">0.1487</text><text class="v" x="1634" y="501">kg</text>
<text class="t" x="1185" y="529">重量</text><text class="v" x="1270.500" y="529" textLength="58">1.4584</text><text class="v" x="1634" y="529">N</text>
<text class="t" x="1185" y="557">惯性矩</text><text class="v" x="1270.500" y="557" textLength="255">{ 80.1302, 103.6160, 45.4210}</text><text class="v" x="1634" y="557" textLength="67">kg·mm²</text>
<text class="t" x="1185" y="585">回转半径</text><text class="v" x="1270.500" y="585" textLength="244">{ 23.2125, 26.3960, 17.4764}</text><text class="v" x="1634" y="585">mm</text>
<text class="t" x="1185" y="613" textLength="76">主轴 (Xp)</text><text class="v" x="1270.500" y="613" textLength="315">Vector( 0.7179, 5.9195e-05, -0.6961)</text>
<text class="t" x="1185" y="641" textLength="75">主轴 (Yp)</text><text class="v" x="1270.500" y="641" textLength="355">Vector( -4.3019e-05, 1.0000, 4.0669e-05)</text>
<text class="t" x="1185" y="669" textLength="75">主轴 (Zp)</text><text class="v" x="1270.500" y="669" textLength="307">Vector( 0.6961, 7.4722e-07, 0.7179)</text>
<text class="t" x="1185" y="697">主惯性矩</text><text class="v" x="1270.500" y="697" textLength="244">{ 59.7980, 59.4014, 21.5386}</text><text class="v" x="1634" y="697" textLength="67">kg·mm²</text>
<use href="#pi1" x="1725" y="411"/><use href="#pi2" x="1749" y="411"/>
<use href="#pi1" x="1725" y="439"/><use href="#pi2" x="1749" y="439"/>
<use href="#pi1" x="1725" y="467"/><use href="#pi2" x="1749" y="467"/><use href="#pi3" x="1773" y="467"/>
<use href="#pi1" x="1725" y="495"/><use href="#pi2" x="1749" y="495"/>
<use href="#pi1" x="1725" y="523"/><use href="#pi2" x="1749" y="523"/>
<use href="#pi1" x="1725" y="551"/><use href="#pi2" x="1749" y="551"/>
<use href="#pi1" x="1725" y="579"/><use href="#pi2" x="1749" y="579"/>
<use href="#pi1" x="1725" y="607"/><use href="#pi2" x="1749" y="607"/><use href="#pi3" x="1773" y="607"/>
<use href="#pi1" x="1725" y="635"/><use href="#pi2" x="1749" y="635"/>
<use href="#pi1" x="1725" y="663"/><use href="#pi2" x="1749" y="663"/>
<use href="#pi1" x="1725" y="691"/><use href="#pi2" x="1749" y="691"/>
<path d="M1792 537L1801 540L1792 543ZM1792 548L1801 551L1792 554ZM1792 559L1801 562L1792 565Z" fill="#777"/>

<!-- watermark -->
<text x="1639" y="825" textLength="77" style="font-family:'Liberation Mono','Noto Serif CJK SC',monospace;font-size:13px;fill:#8a8a8a">UG爱好者论坛</text>
<text x="1724" y="825" textLength="120" style="font-family:'Liberation Mono',monospace;font-size:13px;fill:#8a8a8a">WWW.UGSNX.COM</text>
</svg>
</body></html>
